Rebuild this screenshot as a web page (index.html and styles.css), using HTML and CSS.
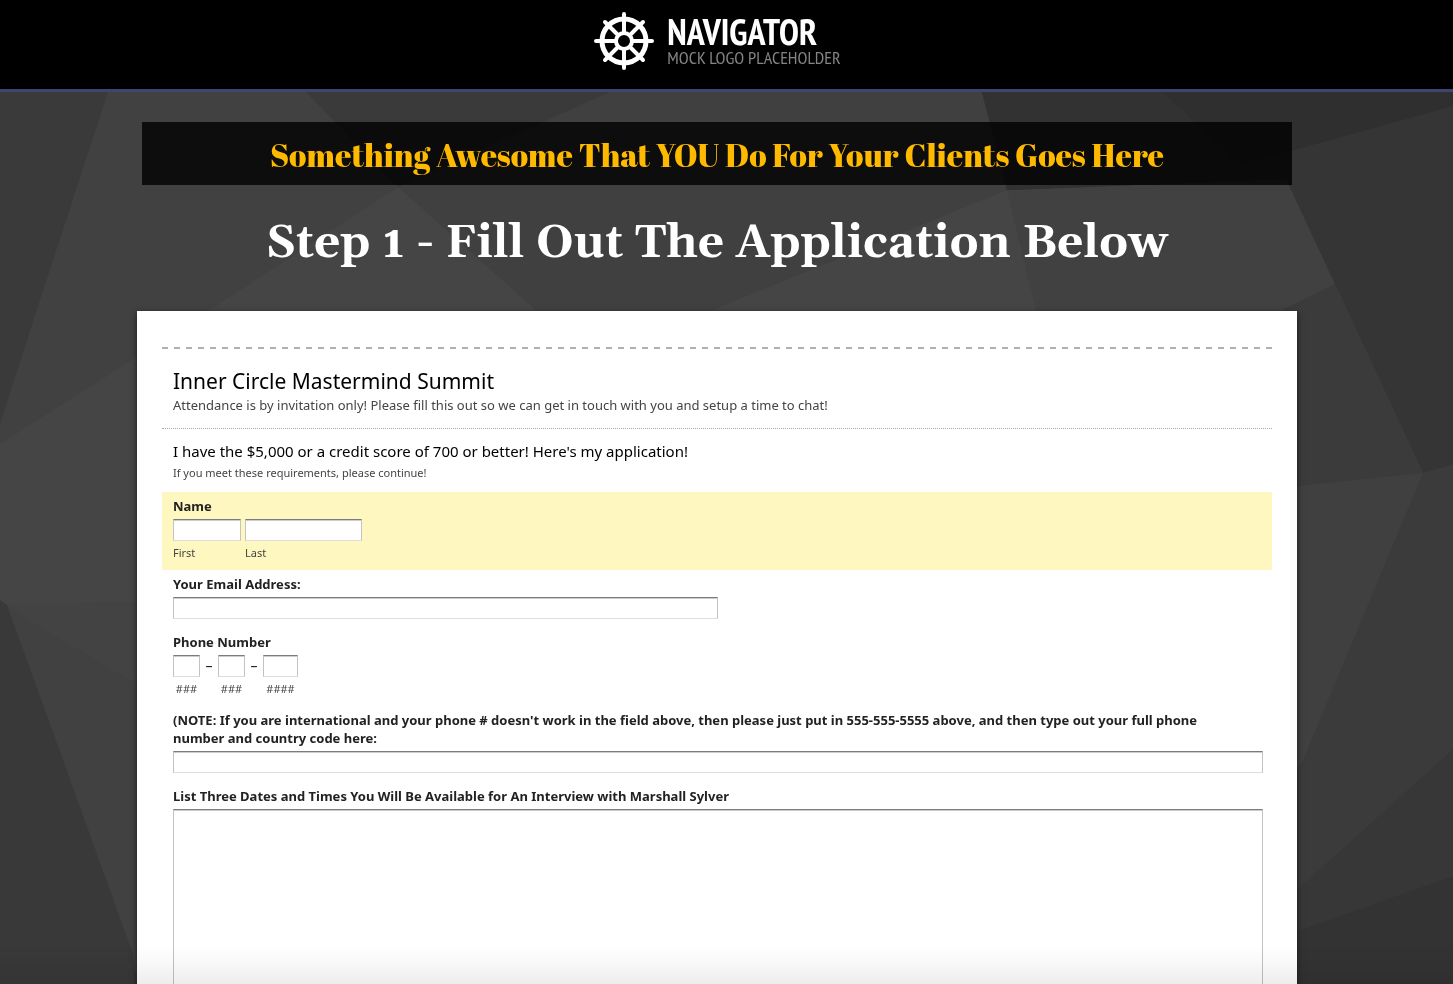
FILE: index.html
```html
<!DOCTYPE html>
<html lang="en">

<head>
    <meta charset="UTF-8">
    <meta name="viewport" content="width=device-width, initial-scale=1.0">
    <title>Navigator: Application</title>
    <link rel="stylesheet" href="styles.css">
</head>

<body>
    <svg class="backdrop" viewBox="0 0 1453 984" preserveAspectRatio="none" aria-hidden="true">
        <rect width="1453" height="984" fill="#414141" />
        <polygon points="0,0 120,0 108,92 40,300 0,424" fill="#3a3a3a" />
        <polygon points="306,92 612,92 398,187" fill="#3a3a3a" />
        <polygon points="398,187 610,92 982,92 1007,190 710,311 537,311" fill="#404040" />
        <polygon points="398,187 537,311 537,600 0,606 0,444 135,358 208,311" fill="#454545" />
        <polygon points="1007,190 1036,311 710,311" fill="#454545" />
        <polygon points="0,600 7,605 133,954 137,984 0,984" fill="#393939" />
        <polygon points="43,629 137,684 137,602 7,605" fill="#434343" />
        <polygon points="982,92 1453,92 1453,465 1423,473 1286,179 1007,190" fill="#353535" />
        <polygon points="982,92 1163,92 1240,165 1286,179 1007,190" fill="#323232" />
        <polygon points="1163,92 1453,92 1453,106 1240,165" fill="#2f2f2f" />
        <polygon points="1280,311 1335,284 1423,473 1297,488" fill="#3b3b3b" />
        <polygon points="1280,488 1423,473 1303,760 1280,790" fill="#404040" />
        <polygon points="1423,473 1453,465 1453,749 1280,905 1280,790 1303,760" fill="#3b3b3b" />
        <polygon points="1453,749 1453,876 1280,937 1280,905" fill="#373737" />
        <polygon points="1453,876 1453,984 1280,984 1280,937" fill="#333333" />
    </svg>

    <header class="site-header">
        <a href="#" class="logo">
            <svg class="logo-icon" viewBox="0 0 62 60" fill="none" stroke="#fff" stroke-linecap="round" aria-hidden="true">
                <circle cx="31" cy="30" r="22" stroke-width="5" />
                <circle cx="31" cy="30" r="8" stroke-width="4" />
                <path stroke-width="4" d="M31 3v19M31 38v19M3 30h20M39 30h20M12 11l13 13M37 36l13 13M50 11L37 24M25 36L12 49" />
            </svg>
            <span class="logo-text">
                <strong>NAVIGATOR</strong>
                <small>MOCK LOGO PLACEHOLDER</small>
            </span>
        </a>
    </header>

    <main>
        <div class="banner">Something Awesome That YOU Do For Your Clients Goes Here</div>
        <h1>Step 1 - Fill Out The Application Below</h1>

        <form class="application-form">
            <div class="form-header">
                <h2>Inner Circle Mastermind Summit</h2>
                <p>Attendance is by invitation only! Please fill this out so we can get in touch with you and setup a time to chat!</p>
            </div>

            <div class="form-section">
                <h3>I have the $5,000 or a credit score of 700 or better! Here's my application!</h3>
                <p>If you meet these requirements, please continue!</p>
            </div>

            <fieldset class="form-group focused">
                <legend>Name</legend>
                <div class="fields name-fields">
                    <div class="field first">
                        <input type="text" id="first-name">
                        <label for="first-name">First</label>
                    </div>
                    <div class="field last">
                        <input type="text" id="last-name">
                        <label for="last-name">Last</label>
                    </div>
                </div>
            </fieldset>

            <div class="form-group">
                <label for="email">Your Email Address:</label>
                <input type="email" id="email" class="medium">
            </div>

            <fieldset class="form-group">
                <legend>Phone Number</legend>
                <div class="fields phone-fields">
                    <div class="field area">
                        <input type="tel" id="phone-area" maxlength="3">
                        <label for="phone-area">###</label>
                    </div>
                    <span class="dash">–</span>
                    <div class="field area">
                        <input type="tel" id="phone-prefix" maxlength="3">
                        <label for="phone-prefix">###</label>
                    </div>
                    <span class="dash">–</span>
                    <div class="field line">
                        <input type="tel" id="phone-line" maxlength="4">
                        <label for="phone-line">####</label>
                    </div>
                </div>
            </fieldset>

            <div class="form-group">
                <label for="international">(NOTE: If you are international and your phone # doesn't work in the field above, then please just put in 555-555-5555 above, and then type out your full phone number and country code here:</label>
                <input type="text" id="international">
            </div>

            <div class="form-group">
                <label for="dates">List Three Dates and Times You Will Be Available for An Interview with Marshall Sylver</label>
                <textarea id="dates" rows="16"></textarea>
            </div>
        </form>
    </main>

    <div class="bottom-fade"></div>
</body>

</html>
```

FILE: styles.css
```css
* {
    box-sizing: border-box;
}

body {
    font-family: 'Lucida Grande', 'Noto Sans', sans-serif;
    margin: 0;
    background-color: #414141;
    color: #222;
}

h1,
h2,
h3,
p {
    margin: 0;
}

.backdrop {
    position: fixed;
    top: 0;
    left: 0;
    width: 100%;
    height: 100%;
    z-index: -1;
}

.bottom-fade {
    position: fixed;
    bottom: 0;
    left: 0;
    width: 100%;
    height: 40px;
    background: linear-gradient(rgba(0, 0, 0, 0), rgba(0, 0, 0, 0.02) 40%, rgba(0, 0, 0, 0.07));
    pointer-events: none;
}

.site-header {
    display: flex;
    justify-content: center;
    padding: 11px 19px 18px 0;
    background-color: #000;
    border-bottom: 3px solid #3f4570;
}

.logo {
    display: flex;
    align-items: center;
    gap: 12px;
    text-decoration: none;
}

.logo-icon {
    width: 62px;
    height: 60px;
}

.logo-text {
    display: flex;
    flex-direction: column;
    font-family: 'PT Sans Narrow', 'Roboto Condensed', sans-serif;
}

.logo-text strong {
    color: #fff;
    font-size: 36px;
    line-height: 34px;
}

.logo-text small {
    color: #848484;
    font-size: 18px;
    line-height: 18px;
}

main {
    padding: 30px 19px 0 0;
}

.banner {
    max-width: 1150px;
    margin: 0 auto;
    padding: 11px 10px 9px;
    background-color: rgba(0, 0, 0, 0.8);
    color: #ffba00;
    font-family: 'Abril Fatface', 'Liberation Serif', serif;
    font-size: 32px;
    line-height: 43px;
    text-align: center;
}

h1 {
    padding: 28px 0 36px;
    color: #fff;
    font-family: Georgia, Gelasio, 'Liberation Serif', serif;
    font-size: 46px;
    line-height: 62px;
    text-align: center;
}

.application-form {
    max-width: 1160px;
    margin: 0 auto;
    padding: 36px 25px 25px;
    background-color: #fff;
    box-shadow: 0 2px 6px rgba(0, 0, 0, 0.6);
}

.form-header {
    padding: 22px 11px 10px;
    background: repeating-linear-gradient(to right, #b0b0b0 0, #b0b0b0 6px, transparent 6px, transparent 12px) top / 100% 2px no-repeat;
    border-bottom: 1px dotted #aaa;
}

.form-header h2 {
    color: #000;
    font-size: 21px;
    font-weight: normal;
    line-height: 24px;
}

.form-header p {
    color: #444;
    font-size: 13px;
    line-height: 25px;
}

.form-section {
    padding: 12px 11px 9px;
}

.form-section h3 {
    color: #000;
    font-size: 15px;
    font-weight: normal;
    line-height: 21px;
}

.form-section p {
    color: #444;
    font-size: 11px;
    line-height: 21px;
}

.form-group {
    margin: 0;
    padding: 5px 9px 9px 11px;
    border: none;
}

.focused {
    background-color: #fff7c0;
}

.form-group > label,
legend {
    display: block;
    float: left;
    width: 98%;
    margin-bottom: 4px;
    padding: 0;
    font-size: 13px;
    font-weight: bold;
    line-height: 18px;
}

.fields {
    display: flex;
    clear: both;
}

.name-fields {
    gap: 4px;
}

.field {
    display: flex;
    flex-direction: column;
}

.field label {
    padding-top: 2px;
    margin-bottom: -2px;
    color: #444;
    font-size: 11px;
    line-height: 20px;
}

.first {
    width: 68px;
}

.last {
    width: 117px;
}

.area {
    width: 27px;
}

.line {
    width: 35px;
}

.phone-fields label {
    text-align: center;
}

.dash {
    width: 18px;
    font-size: 14px;
    line-height: 22px;
    text-align: center;
}

input,
textarea {
    display: block;
    clear: both;
    width: 100%;
    margin: 0;
    padding: 2px;
    background-color: #fff;
    border: 1px solid #c3c3c3;
    border-top-color: #7c7c7c;
    border-bottom-color: #ddd;
    border-radius: 0;
    box-shadow: inset 0 1px 0 #ccc;
    font-family: inherit;
    font-size: 13px;
    outline: none;
}

input {
    height: 22px;
}

textarea {
    resize: none;
}

.medium {
    width: 50%;
}
```
